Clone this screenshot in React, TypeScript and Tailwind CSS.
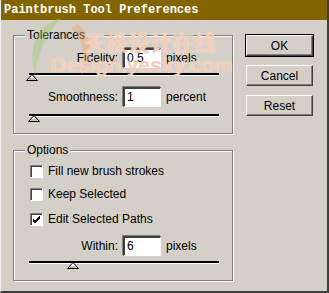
import React from "react";

const FACE = "bg-[#d4d0c8]";
const UI_FONT = { fontFamily: "Tahoma, 'Liberation Sans', Arial, sans-serif" };

function GroupBox({ label, className, children }: { label: string; className: string; children: React.ReactNode }) {
  return (
    <div
      className={`relative border border-[#808080] shadow-[inset_1px_1px_0_#ffffff,1px_1px_0_#ffffff] ${className}`}
    >
      <span className={`absolute -top-[8px] left-[11px] ${FACE} px-[2px] text-[12px] leading-[14px] text-black`}>
        {label}
      </span>
      {children}
    </div>
  );
}

function SunkenInput({ value }: { value: string }) {
  return (
    <div className="w-[38px] h-[20px] bg-white border-t-2 border-l-2 border-t-[#404040] border-l-[#404040] border-b border-r border-b-white border-r-white shadow-[-1px_-1px_0_#808080] pl-[2px] text-[12px] leading-[17px] text-black">
      {value}
    </div>
  );
}

function Slider({ thumb }: { thumb: number }) {
  return (
    <div className="flex flex-col w-[190px]">
      <div className="h-[2px] bg-black border-b border-white box-content" />
      <svg width="12" height="7" viewBox="0 0 12 7" className="-mt-[2px]" style={{ marginLeft: thumb }}>
        <polygon points="6,0.5 11.5,6.5 0.5,6.5" fill="#ffffff" stroke="#000000" strokeWidth="1" />
        <line x1="3" y1="5" x2="9" y2="5" stroke="#808080" />
      </svg>
    </div>
  );
}

function Checkbox({ checked, label }: { checked?: boolean; label: string }) {
  return (
    <div className="flex items-center gap-[5px]">
      <div className="w-[13px] h-[13px] bg-white border-t border-l border-t-[#808080] border-l-[#808080] border-b border-r border-b-white border-r-white shadow-[inset_1px_1px_0_#404040] flex items-center justify-center">
        {checked && (
          <svg width="9" height="9" viewBox="0 0 9 9">
            <path d="M1 4 L3 6 L8 1 M1 5 L3 7 L8 2 M1 6 L3 8 L8 3" stroke="#000" strokeWidth="1" fill="none" />
          </svg>
        )}
      </div>
      <span className="text-[12px] leading-[13px] text-black">{label}</span>
    </div>
  );
}

function Button({ label, isDefault }: { label: string; isDefault?: boolean }) {
  return (
    <div className={isDefault ? "border border-black" : "border border-transparent"}>
      <div className="h-[21px] w-[67px] flex items-center justify-center border-t border-l border-t-white border-l-white border-b border-r border-b-[#404040] border-r-[#404040] shadow-[inset_-1px_-1px_0_#808080] text-[12px] text-black">
        {label}
      </div>
    </div>
  );
}

function FieldRow({ label, value, unit }: { label: string; value: string; unit: string }) {
  return (
    <div className="flex items-center">
      <span className="w-[109px] text-right pr-[5px] text-[12px] text-black">{label}</span>
      <SunkenInput value={value} />
      <span className="pl-[5px] text-[12px] text-black">{unit}</span>
    </div>
  );
}

export default function App() {
  return (
    <div
      className={`relative w-[329px] h-[293px] ${FACE} border-l border-l-[#f0f0f0] border-r-2 border-r-[#404040] border-b-2 border-b-[#404040] overflow-hidden`}
      style={UI_FONT}
    >
      {/* title bar */}
      <div className="h-[20px] bg-[#836500] flex items-center pl-[3px]">
        <span
          className="text-white font-bold text-[12px] leading-none"
          style={{ fontFamily: "'Liberation Mono', 'Courier New', monospace" }}
        >
          Paintbrush Tool Preferences
        </span>
      </div>

      <div className="flex">
        <div className="pl-[12px] pt-[15px] flex flex-col">
          <GroupBox label="Tolerances" className="w-[220px] h-[99px]">
            <div className="flex flex-col pt-[12px]">
              <FieldRow label="Fidelity:" value="0.5" unit="pixels" />
              <div className="pl-[15px] mt-[5px]">
                <Slider thumb={-3} />
              </div>
              <div className="mt-[6px]">
                <FieldRow label="Smoothness:" value="1" unit="percent" />
              </div>
              <div className="pl-[15px] mt-[7px]">
                <Slider thumb={-1} />
              </div>
            </div>
          </GroupBox>

          <GroupBox label="Options" className="w-[220px] h-[131px] mt-[16px]">
            <div className="flex flex-col pl-[16px] pt-[14px] gap-[10px]">
              <Checkbox label="Fill new brush strokes" />
              <Checkbox label="Keep Selected" />
              <div className="mt-[2px]">
                <Checkbox checked label="Edit Selected Paths" />
              </div>
            </div>
            <div className="mt-[10px]">
              <FieldRow label="Within:" value="6" unit="pixels" />
            </div>
            <div className="pl-[15px] mt-[5px]">
              <Slider thumb={38} />
            </div>
          </GroupBox>
        </div>

        <div className="pl-[12px] pt-[14px] flex flex-col gap-[7px]">
          <Button label="OK" isDefault />
          <Button label="Cancel" />
          <Button label="Reset" />
        </div>
      </div>

      {/* watermark */}
      <svg width="80" height="70" viewBox="0 0 80 70" className="absolute left-[20px] top-[14px] opacity-40 pointer-events-none">
        <path d="M40 4 C18 10 6 30 14 62 C16 40 24 22 40 4 Z" fill="#9cc86a" />
        <path d="M56 10 C72 20 74 44 60 62 C66 44 64 28 50 14 Z" fill="#f0a060" />
      </svg>
      <div
        className="absolute left-[83px] top-[30px] text-[22px] font-bold leading-none text-[#eea47a]/55 pointer-events-none [text-shadow:0_0_1px_#ffffff]"
        style={{ fontFamily: "'Noto Sans CJK SC', sans-serif" }}
      >
        天极设计在线
      </div>
      <div
        className="absolute left-[50px] top-[54px] text-[21px] font-bold leading-none text-[#eea47a]/55 pointer-events-none [text-shadow:0_0_1px_#ffffff]"
        style={{ fontFamily: "'Liberation Sans', Arial, sans-serif" }}
      >
        Design.yesky.com
      </div>
    </div>
  );
}
